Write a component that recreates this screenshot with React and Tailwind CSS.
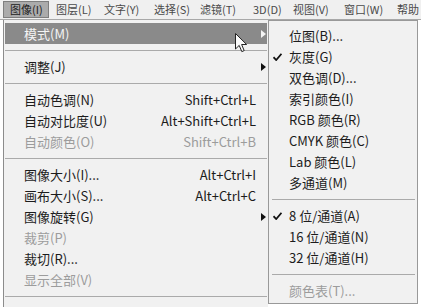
const menuBar = [
  { label: "图像(I)", w: "w-[46px]", active: true },
  { label: "图层(L)", w: "w-[48px]" },
  { label: "文字(Y)", w: "w-[50px]" },
  { label: "选择(S)", w: "w-[46px]" },
  { label: "滤镜(T)", w: "w-[53px]" },
  { label: "3D(D)", w: "w-[40px]" },
  { label: "视图(V)", w: "w-[51px]" },
  { label: "窗口(W)", w: "w-[53px]" },
  { label: "帮助", w: "w-[30px]" },
];

const mainItems = [
  { label: "模式(M)", arrow: true, active: true },
  { sep: true },
  { label: "调整(J)", arrow: true },
  { sep: true },
  { label: "自动色调(N)", key: "Shift+Ctrl+L" },
  { label: "自动对比度(U)", key: "Alt+Shift+Ctrl+L" },
  { label: "自动颜色(O)", key: "Shift+Ctrl+B", disabled: true },
  { sep: true },
  { label: "图像大小(I)...", key: "Alt+Ctrl+I" },
  { label: "画布大小(S)...", key: "Alt+Ctrl+C" },
  { label: "图像旋转(G)", arrow: true },
  { label: "裁剪(P)", disabled: true },
  { label: "裁切(R)..." },
  { label: "显示全部(V)", disabled: true },
  { sep: true },
  { label: "" },
];

const subItems = [
  { label: "位图(B)..." },
  { label: "灰度(G)", checked: true },
  { label: "双色调(D)..." },
  { label: "索引颜色(I)" },
  { label: "RGB 颜色(R)" },
  { label: "CMYK 颜色(C)" },
  { label: "Lab 颜色(L)" },
  { label: "多通道(M)" },
  { sep: true },
  { label: "8 位/通道(A)", checked: true },
  { label: "16 位/通道(N)" },
  { label: "32 位/通道(H)" },
  { sep: true },
  { label: "颜色表(T)...", disabled: true },
];

const Arrow = ({ color }) => (
  <svg width="5" height="8" viewBox="0 0 5 8">
    <path d="M0 0 L5 4 L0 8 Z" fill={color} />
  </svg>
);

const Check = () => (
  <svg width="9" height="8" viewBox="0 0 9 8">
    <path d="M0.5 4.2 L3.2 7 L8.5 0.8" fill="none" stroke="#111" strokeWidth="1.8" />
  </svg>
);

export default function App() {
  return (
    <div className="relative h-[307px] w-[421px] overflow-hidden bg-white font-['Noto_Sans_CJK_SC','Noto_Sans',sans-serif]">
      {/* menu bar */}
      <div className="flex h-[20px] items-center border-b border-[#a8a8a8] bg-[#f0f0f0] pl-[3px] text-[11px] text-[#4a4a4a]">
        {menuBar.map((m) => (
          <div
            key={m.label}
            className={
              m.active
                ? `${m.w} flex h-[17px] items-center border border-[#7e7e7e] bg-[#ababab] pl-[6px] text-[#222]`
                : `${m.w} flex h-[17px] items-center pl-[7px]`
            }
          >
            {m.label}
          </div>
        ))}
      </div>

      <div className="flex">
        {/* main menu */}
        <div className="h-[290px] w-[265px] ml-[3px] border-l border-[#8c8c8c] bg-[#f1f1f1] px-[1px] pt-[3px] text-[13px] text-[#1c1c1c]">
          {mainItems.map((it, i) =>
            it.sep ? (
              <div key={i} className="flex h-[12px] items-center">
                <div className="h-px w-full bg-[#aaaaaa]" />
              </div>
            ) : (
              <div
                key={i}
                className={`flex h-[21px] items-center pl-[19px] ${
                  it.active ? "bg-[#8a8a8a] text-[#f4f4f4]" : ""
                } ${it.disabled ? "text-[#9c9c9c]" : ""}`}
              >
                <span className="flex-1 whitespace-nowrap">{it.label}</span>
                {it.key && <span className="whitespace-nowrap">{it.key}</span>}
                <span className="flex w-[11px] items-center pl-[5px]">
                  {it.arrow && <Arrow color={it.active ? "#f4f4f4" : "#111"} />}
                </span>
              </div>
            )
          )}
        </div>

        {/* submenu */}
        <div className="h-[284px] w-[150px] border border-[#999999] bg-[#f1f1f1] pt-[4px] text-[13px] text-[#1c1c1c]">
          {subItems.map((it, i) =>
            it.sep ? (
              <div key={i} className="flex h-[12px] items-center pl-[3px] pr-[2px]">
                <div className="h-px w-full bg-[#aaaaaa]" />
              </div>
            ) : (
              <div
                key={i}
                className={`flex h-[21px] items-center ${it.disabled ? "text-[#9c9c9c]" : ""}`}
              >
                <span className="flex w-[20px] items-center pl-[4px]">
                  {it.checked && <Check />}
                </span>
                <span className="whitespace-nowrap">{it.label}</span>
              </div>
            )
          )}
        </div>
      </div>

      {/* mouse pointer */}
      <svg
        className="absolute left-[235px] top-[33px]"
        width="13"
        height="20"
        viewBox="0 0 13 20"
      >
        <path
          d="M0.5 0.5 L0.5 16 L4.2 12.4 L6.8 18.6 L9.2 17.6 L6.6 11.5 L11.6 11.5 Z"
          fill="#fafafa"
          stroke="#222"
          strokeWidth="1"
          strokeLinejoin="round"
        />
      </svg>
    </div>
  );
}
